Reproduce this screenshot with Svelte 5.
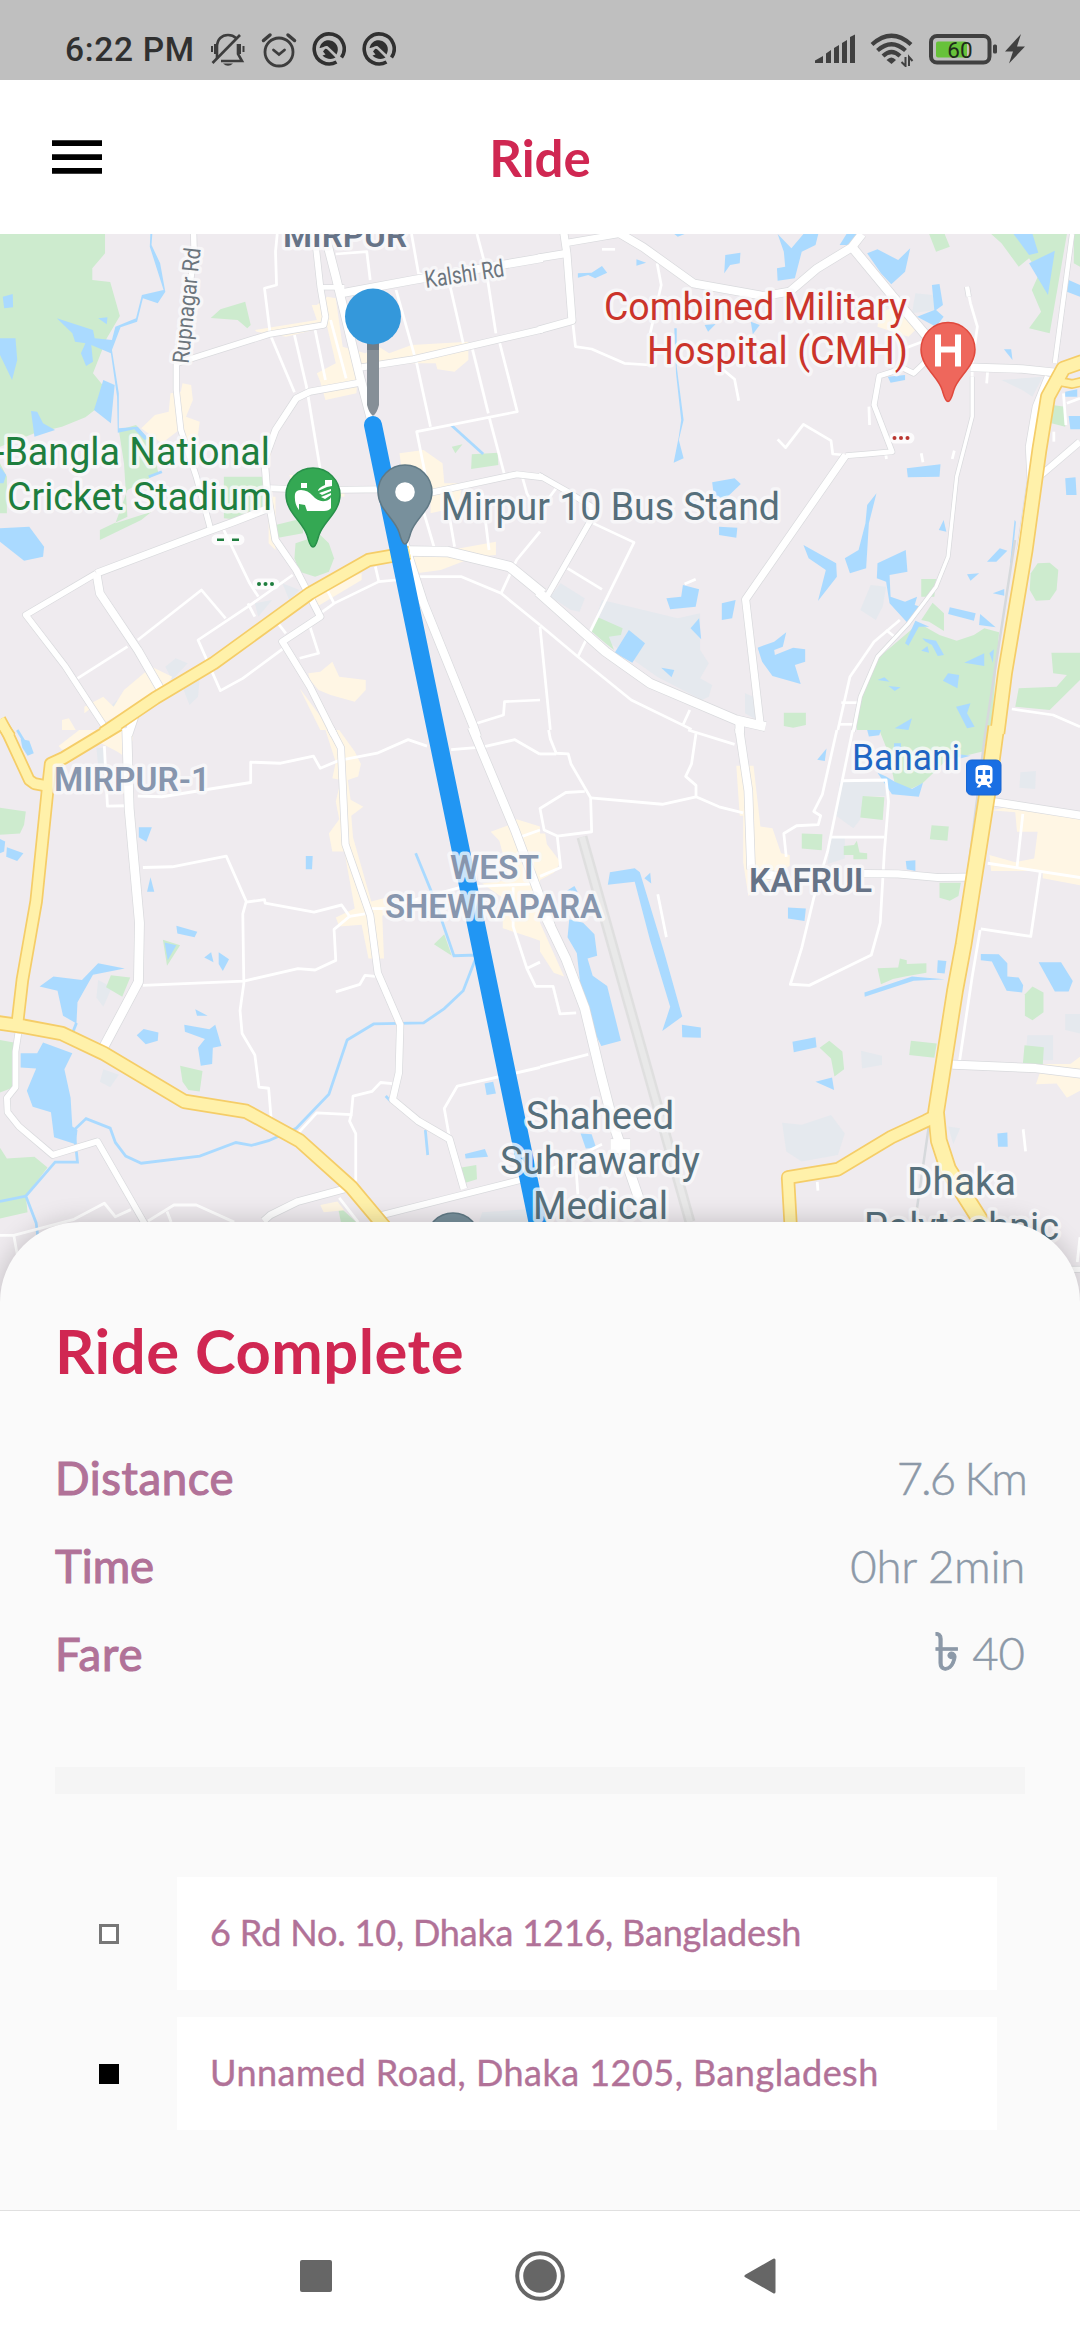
<script>
  // The map is drawn as four tiles; each tile has its own local units.
  const tiles = [
    {
      transform: 'translate(0 230) scale(.34439 .33333)',
      green: [
        'M0,0H305V70L268,115V150L320,156 348,258 310,325 270,430 298,465 275,540 248,562 180,590 100,610 0,650Z',
        'M612,264L640,238 712,215 728,285 718,295 690,270Z',
        'M345,600L395,585 440,640 460,730 370,780 335,880 440,845 410,870 290,930V900L370,860 360,700Z',
        'M0,700L20,740V850H0Z', 'M650,740H765V840L700,870 650,865Z', 'M800,885L880,865 880,910 800,925Z',
        'M858,940L930,915 955,940 970,985 955,1025 915,1040 870,1025 855,985Z',
        'M1370,673L1445,668 1447,705 1368,717Z', 'M1312,650L1343,643 1322,670Z'
      ],
      water: [
        'M165,265L270,300 275,325 325,330 335,290 395,265 412,195 475,180 435,50 437,0H443L440,45 465,100 480,185 458,220 415,205 398,275 350,292 325,360 345,490 345,595 400,590 430,625 420,630 390,598 342,608 340,500 322,370 265,345 270,395 250,408 235,370 248,340 218,335 210,310Z',
        'M8,200L37,192 38,232 12,235Z', 'M0,325H45L50,390 35,450 0,375Z',
        'M300,450L333,465 322,580 273,540Z', 'M90,543L108,545 125,580 160,600 100,620Z',
        'M0,895L85,890 128,950 125,980 70,992 0,935Z', 'M285,265L312,262 310,283Z', 'M0,710L18,735 10,760H0Z'
      ],
      creek: ['M1310,585L1403,672', 'M432,740L470,725'],
      shop: [
        'M905,225L920,225 950,200 975,205 995,350 1060,370 1100,350 1130,370 1195,345 1360,335V390L1320,425 1270,418 1265,400 1110,400 1040,420 1035,490 945,510 930,455 920,430 975,400 950,290 830,320 745,305 740,300 920,270Z',
        'M410,595L450,555 490,545 495,490 525,485 530,460 555,465 560,510 540,560 580,575 570,650 545,640 520,600 470,640Z',
        'M1160,670L1230,660 1285,700 1290,760 1340,760 1335,830 1250,850 1250,770 1170,750Z',
        'M840,735H890V755L1000,770V800L860,790Z', 'M780,800H800V960L780,940Z',
        'M1200,980L1440,935V975L1380,980 1280,1020 1210,1030Z', 'M900,1090L1050,1030 1050,1050 920,1130 900,1110Z',
        'M895,1330L930,1325 965,1295 985,1340 1062,1350V1380L1030,1415 960,1395 925,1380 900,1350Z',
        'M870,1375L960,1500H930Z', 'M360,1380L440,1310 500,1340 480,1375 300,1480 270,1430 245,1450 245,1430 300,1400 330,1430Z',
        'M180,1470L200,1465 220,1500H180Z'
      ],
      gray: ['M820,1060L870,1080 840,1110Z', 'M740,1120L790,1110 750,1160Z', 'M480,1310L510,1285 545,1300 500,1350Z', 'M530,1370L580,1345 575,1400 550,1425Z', 'M310,1440L340,1410 360,1430 325,1460Z'],
      minor: [
        'M805,12L800,65 803,165 768,175 785,315 855,487', 'M855,315L890,470 935,750', 'M915,300L945,450', 'M960,270L1005,445',
        'M975,72L1065,65 1075,150', 'M1150,180L1210,400 1250,590', 'M1195,12L1215,130 1305,160 1345,340', 'M1385,12L1410,110 1440,310',
        'M1370,350L1418,550', 'M1450,335L1502,545 1210,605 1240,760', 'M1420,560L1465,735', 'M1300,830L1320,950', 'M1220,810L1260,950', 'M1400,790L1420,960',
        'M650,900L725,1060 750,1100', 'M850,1035L720,1130 575,1230 640,1382 705,1345 830,1250', 'M400,1230L585,1080 655,1165', 'M225,1345L370,1250',
        'M720,1120L740,1160', 'M800,1170L830,1210', 'M900,1190L925,1270 870,1285', 'M930,1150L970,1120 1100,1055 1150,1050', 'M1200,1040L1340,1040 1455,1090 1568,1185',
        'M1568,905L1500,990 1455,1090', 'M1090,1010L1100,1055', 'M950,1080L970,1120', 'M1385,1480L1462,1455 1465,1415 1568,1410', 'M1515,735L1530,790 1568,860'
      ],
      road: [
        { w: 17, d: 'M562,0L564,80 540,240 512,400 512,480 525,600 570,740 610,892' },
        { w: 18, d: 'M512,400L780,313 940,285 945,260 930,170 912,0' },
        { w: 15, d: 'M930,172L1000,172' },
        { w: 25, d: 'M940,0L975,140 1045,440 1083,590 1180,960 1230,1120 1375,1490 1385,1520' },
        { w: 25, d: 'M990,190L1200,150 1575,84' },
        { w: 20, d: 'M1050,412L1200,388 1575,298' },
        { w: 20, d: 'M1045,458L900,485 860,505 800,600 768,690 775,780 800,930 860,1020 930,1160 820,1235 900,1370 970,1515' },
        { w: 19, d: 'M785,775L940,780 1120,778 1220,795 1500,733 1575,742' },
        { w: 22, d: 'M280,1030L600,905 680,875 780,835' },
        { w: 18, d: 'M280,1030L75,1155 190,1310 310,1500' },
        { w: 24, d: 'M280,1030L290,1090 400,1260 470,1385' },
        { w: 24, d: 'M390,1460L372,1515' },
        { w: 30, d: 'M1185,963L1300,965 1480,1010 1575,1090' }
      ],
      highway: [{ w: 34, d: 'M300,1510L450,1405 620,1300 900,1090 1070,990 1190,968' }, { w: 28, d: 'M-5,1480L10,1490 30,1520' }]
    },
    {
      transform: 'translate(540 230) scale(.34439 .33333)',
      green: [
        'M1130,12H1175L1190,50 1150,65Z', 'M1310,12H1568V110L1550,100 1550,12 1530,12 1480,310 1420,295 1455,245 1428,180 1450,130 1420,85 1390,110 1340,40Z',
        'M1487,525L1525,530V590L1485,580Z', 'M1425,1030L1445,1000 1480,998 1505,1020 1500,1080 1480,1110 1440,1112 1422,1080Z',
        'M1107,1047H1150L1145,1100H1107Z', 'M1107,1170L1140,1118 1173,1150V1203L1130,1175Z',
        'M920,1500L922,1430 975,1290 1100,1180 1160,1215 1210,1232 1260,1215 1290,1195 1333,1207 1310,1500Z',
        'M1485,1268H1568V1350L1480,1440 1380,1430 1390,1375 1500,1370 1530,1335 1490,1330Z',
        'M165,1160L240,1195 235,1215 200,1220 215,1260 190,1240 145,1200Z', 'M708,1448H772V1485L735,1493 708,1488Z'
      ],
      water: [
        'M690,12L730,55 765,12H808L800,45 760,65 740,145 690,152 688,115 712,110 708,65Z', 'M538,75L582,68 580,100 552,105 535,130Z',
        'M110,130L150,128 180,108 195,128 160,145 140,135 110,143Z', 'M280,88L308,98 280,107Z', 'M390,12H420L400,20Z', 'M890,12H935L895,45 870,45Z',
        'M950,70L980,58 1040,90 1075,55 1060,125 1020,163 990,130Z', 'M1138,165L1160,162 1170,225 1150,240 1172,260 1150,290 1095,260 1145,240Z',
        'M390,295H397V410L417,570 403,630 417,685 388,698 403,620 410,570 395,430Z', 'M478,285L510,282 488,305Z', 'M612,275L638,285 618,313Z',
        'M1010,440L1060,435 1060,450 1018,458Z', 'M1065,715L1163,703 1160,740 1068,742Z', 'M500,757L565,745 583,762 540,805 505,800Z', 'M520,890L573,893 570,923 520,915Z',
        'M977,790L955,880 947,1015 900,1030 885,985 925,960 945,880 950,825Z', 'M765,945L860,1000 862,1040 807,1113 830,1020 780,985Z',
        'M980,1000L1062,960 1067,1025 1015,1035 1018,1100 1060,1115 1095,1100 1088,1125 1105,1130 1068,1180 1015,1120 1005,1055 978,1045Z',
        'M415,1065L462,1078 452,1130 378,1138 367,1105 410,1100Z', 'M528,1120L568,1110 558,1165 528,1170Z', 'M462,1165L468,1228 437,1195Z',
        'M258,1200L305,1240 268,1298 217,1268Z', 'M632,1253L680,1235 715,1207 705,1250 680,1260 682,1275 735,1253 770,1258V1295L740,1305 757,1362 675,1338 645,1295Z',
        'M352,1313L390,1320 382,1342Z', 'M1190,1132L1265,1150 1260,1172 1185,1152Z', 'M1278,1152L1323,1192 1275,1185Z', 'M1240,1033L1275,1030 1250,1052Z',
        'M1298,995L1335,955 1357,962 1325,995Z', 'M1158,900L1172,870 1180,905Z', 'M1347,358H1368L1372,390Z', 'M1420,100L1495,62 1475,195Z', 'M1375,12H1430L1447,68 1420,75Z',
        'M1535,150L1568,165V200L1530,185Z', 'M1525,485L1560,478V500L1525,500Z', 'M1535,558H1568V598H1540Z', 'M1525,745L1555,742 1558,795 1528,795Z',
        'M1315,1090L1348,1077V1097Z', 'M1232,1298L1290,1270 1290,1308Z', 'M1110,1225L1150,1232 1173,1275 1155,1278 1138,1245 1120,1235Z', 'M1090,1172L1130,1190 1100,1190 1070,1247 1060,1240Z',
        'M1185,1330L1217,1335 1212,1375 1170,1352Z', 'M1208,1430L1250,1420 1240,1450 1262,1490 1240,1495Z', 'M1365,1000L1378,870 1382,875 1370,1000Z', 'M980,1350L1000,1342 1015,1355Z', 'M1012,1368L1047,1372 1030,1383Z', 'M1030,1495L1080,1465 1070,1500Z', 'M1107,1262L1125,1248 1130,1268Z', 'M1305,1270L1318,1258 1315,1298Z'
      ],
      creek: [],
      shop: ['M985,250L1040,225 1090,300 1070,320 980,290Z'],
      gray: [
        'M60,1060L130,1105 115,1145 90,1140 30,1100Z', 'M180,1110L400,1165 465,1150V1260L490,1300 465,1345 500,1365 490,1400 470,1410 340,1340 150,1200Z',
        'M960,1065L1005,1070 995,1130 975,1170 930,1140Z', 'M1090,190L1140,195 1150,240 1080,250Z', 'M1340,450L1460,440 1430,500 1400,480Z', 'M595,1390L620,1400 630,1470 595,1450Z'
      ],
      minor: [
        'M340,100L352,165 320,310', 'M95,275L103,350 150,357 245,400 320,405', 'M530,418L565,448 577,512', 'M690,628L713,653 765,583 845,632 850,672 885,675',
        'M955,530L957,585', 'M155,880L273,937 110,1280', 'M80,1015L180,1078', 'M0,1185L110,1280 265,1410 440,1498', 'M435,1440L415,1485', 'M0,1190L30,1500',
        'M0,840L50,770', 'M1060,355L1110,335', 'M1300,420L1297,460', 'M1107,670L1112,697', 'M1203,662L1197,687', 'M1003,665L1006,687', 'M180,58H218', 'M420,1062L452,1048',
        'M1520,490L1527,585', 'M1530,520L1568,505', 'M1370,1437L1490,1455 1568,1490', 'M1240,170L1250,220 1270,290 1255,400 1255,550',
        'M1005,1200L1035,1225', 'M875,1418H920', 'M870,1483H910', 'M1045,1170L970,1235 900,1340 865,1500', 'M1492,605V635'
      ],
      road: [
        { w: 14, d: 'M1240,170L1245,200' }, { w: 11, d: 'M1255,440L1255,560 1210,740 1185,980 1150,1070 1070,1180 980,1280 930,1400 910,1505' },
        { w: 23, d: 'M-5,84L78,70' }, { w: 22, d: 'M68,0L78,70 93,272 -5,300' }, { w: 20, d: 'M70,40L230,12' },
        { w: 25, d: 'M215,0L300,52 445,160 650,198 725,185 805,115 905,52 935,12' },
        { w: 27, d: 'M905,50L1025,200 1120,315' }, { w: 16, d: 'M1120,395L1085,430 1055,415 985,438 970,525 1022,665 950,672 888,677' },
        { w: 22, d: 'M888,675L597,1108 640,1490' }, { w: 24, d: 'M1250,412L1400,417 1500,428' }, { w: 14, d: 'M1545,12L1495,400' },
        { w: 20, d: 'M1475,440L1440,530 1420,650 1425,750 1395,960' }, { w: 20, d: 'M1455,735L1568,635' },
        { w: 17, d: 'M-5,735L80,785 150,830 145,875 20,1100' }, { w: 28, d: 'M-5,1086L190,1265 320,1360 570,1470 655,1490' }, { w: 26, d: 'M580,1475V1510' }
      ],
      highway: [{ w: 38, d: 'M1575,395L1520,415 1475,500 1450,660 1410,960 1350,1330 1328,1510' }, { w: 22, d: 'M1575,455L1545,462 1510,455' }]
    },
    {
      transform: 'translate(0 730) scale(.34439 .35714)',
      green: [
        'M0,218L75,228 70,265 58,290 0,293Z', 'M473,587L523,603 485,660Z', 'M322,687L378,693 355,747 308,720Z', 'M1290,572L1312,632 1260,600Z',
        'M0,868L40,875V1000L0,1015Z', 'M523,940L588,955 580,1012 547,1008 530,985Z', 'M0,1170L20,1200 100,1195 138,1225 75,1305 80,1350 0,1368Z', 'M1340,1225L1383,1218 1385,1258 1345,1270Z', 'M980,1330L1035,1378H990Z'
      ],
      water: [
        'M60,25L85,30 98,65 80,72 65,50Z', 'M0,305L15,312 12,340 0,345Z', 'M20,328L68,345 50,367 18,355Z', 'M403,272H441L425,313 403,300Z', 'M437,412L448,453H427Z',
        'M888,353H908L906,390H888Z', 'M512,548L573,565 565,580 515,570Z', 'M478,595L512,603 487,645Z', 'M593,637L613,622 620,650Z', 'M635,622L665,642 647,675 635,655Z',
        'M115,718L155,690 238,700 285,653 362,668 270,685 225,762 222,822 183,800 167,730Z', 'M397,855L417,837 460,847 458,870 423,880Z',
        'M567,782L603,800H572Z', 'M535,825L608,838 625,825 643,885 618,890 616,935 583,940 575,890 595,865 537,845Z',
        'M60,905H108L125,875 210,905 187,950 205,1030 210,1110 225,1120 220,1160 157,1140 148,1070 95,1055 78,1010 105,948 60,945Z',
        'M1407,990L1432,985 1440,1018 1413,1022Z', 'M1350,1187L1408,1173 1417,1195 1352,1200Z', 'M1568,1200L1550,1220 1568,1260Z'
      ],
      creek: ['M1207,345L1260,470 1318,632 1385,630 1345,730 1290,780 1230,820 1085,823 1008,868 955,1020 860,1115 780,1150 730,1163 685,1155 580,1193 410,1213 365,1193 335,1155 320,1115 250,1088 215,1120 225,1210 160,1210 75,1305 105,1380 110,1420', 'M1235,1120L1242,1190', 'M1120,1025L1135,1040', 'M0,1320L75,1305', 'M50,0L75,40', 'M222,820L210,850'],
      shop: [
        'M170,45L230,0H385V30H355V70L340,60 280,30 180,55Z', 'M945,0H985L1030,60 1048,95 1040,130 1010,140 1018,195 1055,215 1020,240 1025,300 1078,480 1140,465V510L1110,520 1115,640 1070,640 1050,545 985,550 975,525 1030,500 1000,340 965,340 955,290 985,250 975,200 990,140 965,135 975,90Z',
        'M1425,285L1480,265 1500,250 1568,270V590L1540,580 1460,555V470L1400,430 1480,420 1450,310Z', 'M930,1330L980,1320 1000,1345 940,1350Z'
      ],
      gray: ['M280,50H305V120L285,100Z', 'M285,700L325,720 300,775 280,750Z', 'M300,950L345,965 320,1000 290,985Z', 'M1400,1350L1568,1340V1380H1390Z'],
      minor: [
        'M303,45L312,213 370,212', 'M400,185L470,187 728,147V90L815,93 910,73 930,107 985,85 1050,73 1095,65 1185,27 1240,45', 'M1310,55L1400,48 1495,27 1568,68',
        'M415,385L500,383 657,353 715,480 705,515 708,710 697,785 703,850 740,910 752,1000 780,1003 787,1085', 'M715,482L768,475 770,485 912,510 992,490 1015,522 970,558 975,645 915,672 865,668 708,703 415,715',
        'M975,733L1045,712 1060,687 1090,690', 'M860,1135L920,1072 1020,1077 1025,1025 1080,1012 1105,987 1140,990', 'M1020,1077L1015,1095 1033,1130V1270', 'M1305,1140L1290,1060 1328,997 1568,945',
        'M0,1415L40,1415 50,1468', 'M40,1415L215,1370 303,1325 335,1363 380,1343', 'M430,1375L505,1330 570,1330 680,1378', 'M485,1348L497,1378', 'M985,1310L1040,1378',
        'M1080,500H1120', 'M1150,490L1340,440 1568,430', 'M1490,440L1490,550 1530,668 1568,650', 'M1530,668L1555,718H1568', 'M1510,300L1568,280', 'M1015,522L1060,515'
      ],
      road: [
        { w: 27, d: 'M368,-5L375,220 405,540 402,705 300,890' }, { w: 20, d: 'M960,-5L990,50 1003,320 1075,520 1097,680 1162,825 1158,960 1140,1035 1215,1095 1305,1145 1347,1285' },
        { w: 25, d: 'M1370,-8L1495,280 1600,550' }, { w: 18, d: 'M53,850L45,900V1000L20,1030 22,1070 55,1110 153,1190 283,1152 420,1382' },
        { w: 20, d: 'M765,1375L785,1358 865,1320 1000,1285' }, { w: 18, d: 'M1110,1358L1347,1300 1530,1255' }
      ],
      highway: [
        { w: 35, d: 'M-5,820L70,830 180,850 300,905 535,1040 715,1068 870,1150 1020,1280 1120,1395' },
        { w: 31, d: 'M345,-15L185,78 147,95 138,170 105,480 65,700 50,825' }, { w: 28, d: 'M0,-30L25,15 85,140 100,150 138,157' }
      ]
    },
    {
      transform: 'translate(540 730) scale(.34439 .35714)',
      green: [
        'M985,0H1305L1285,60 1180,85 1110,150 1070,168 1030,150 1010,60Z', 'M937,185L1000,188 995,252 930,245Z', 'M760,290L820,292 818,337 760,332Z', 'M1137,267L1187,270 1183,310 1132,306Z',
        'M882,325L912,322 920,310 928,343 950,345V362H910V350L882,350Z', 'M1160,428H1222L1215,465 1190,478 1160,470Z', 'M980,667L1040,665 1045,640 1065,645V655L1122,653V680L1060,690 1025,697 990,712Z',
        'M1408,740L1430,718 1462,735V790L1430,813 1408,800Z', 'M812,890L840,870 878,900 883,950 855,970 845,920Z', 'M1077,870L1152,878 1145,918 1072,910Z', 'M1407,883L1463,888 1460,935H1402Z'
      ],
      water: [
        'M950,0H990L985,15 955,18Z', 'M832,52L827,87 805,83Z', 'M1028,37H1048V60H1028Z', 'M980,120L1005,130 1030,145 1080,165 1112,148 1100,187 1022,180Z', 'M1062,367L1090,365V395L1065,390Z',
        'M720,497L772,500 768,535 720,528Z', 'M203,398L275,387 290,398 360,620 413,802 355,843 378,775 320,590 275,425 197,433Z', 'M303,415L320,400 323,430Z', 'M78,450L100,437 110,455Z',
        'M85,530L125,540 158,572 166,632 138,640 153,688 195,717 235,870 178,885 145,820 118,720 107,625 80,580Z', 'M412,825L467,833V862L413,860Z', 'M733,873L800,860 803,888 737,902Z', 'M800,985L848,973 854,1008Z',
        'M942,735L1080,690 1175,698 1085,702 943,747Z', 'M1155,645L1180,647 1175,682 1153,680Z', 'M1280,627L1332,628 1357,653V690L1390,693 1403,715 1400,735 1355,730 1312,648 1280,645Z',
        'M1448,650H1513L1547,703 1535,732H1495Z', 'M1328,1130L1357,1127 1358,1167H1330Z', 'M118,1130L150,1132 163,1170 133,1172Z', 'M1215,68L1250,72 1220,80Z'
      ],
      creek: [],
      shop: [
        'M570,100H620L640,270 675,275 700,345 725,350V380L605,465 590,370V240L580,240Z', 'M1310,225L1390,210 1568,245V435L1460,415 1460,395 1310,395 1305,350 1380,370 1435,360 1445,285 1385,285 1380,230Z',
        'M0,290H15L20,320 60,370 40,400 0,420Z', 'M0,540L70,690 40,680 0,620Z', 'M1460,935H1540L1568,915V1010L1530,1030 1500,990 1440,992Z'
      ],
      gray: [
        'M870,145H1003V185L940,185 930,250 910,275 860,240Z', 'M845,300H885V360L835,375Z', 'M703,1100L760,1105 845,1078 885,1130 865,1190 760,1208 715,1180Z', 'M1395,118L1440,115 1438,165 1392,162Z',
        'M1415,855H1490V925H1410Z', 'M1525,795H1568V850L1525,840Z', 'M932,898L993,912V938L935,948Z', 'M1185,1110L1220,1115 1200,1160Z'
      ],
      minor: [
        'M25,0L30,25 47,65 82,67 90,95 147,190 150,285 50,297 12,280 0,220 75,175 130,172', 'M0,67H47', 'M147,190L355,208 453,187 520,215 590,232', 'M430,0L565,40', 'M453,10L440,95 423,130 453,155V187',
        'M50,297L60,385 0,410', 'M862,0L820,180 795,228 815,240 808,265 745,268 708,290 715,355', 'M908,0L835,340 795,470 760,610 727,712 782,715 962,630 988,540 1000,340 1012,200 1005,140 875,142',
        'M845,300H1000', 'M342,460L367,580', 'M0,718H38L58,795 105,792', 'M0,943L140,908', 'M1402,235L1385,385', 'M1300,373L1568,413', 'M1453,395L1425,578 1280,557', 'M1278,560L1255,690 1217,935',
        'M1403,1118L1410,1180', 'M805,1265L807,1290', 'M105,1230L110,1300', 'M0,1245L180,1160', 'M1568,1420L1560,1490'
      ],
      road: [
        { w: 24, d: 'M578,-5L605,170 613,390' }, { w: 24, d: 'M613,400L700,410' }, { w: 28, d: 'M10,510L75,640 130,780 175,960 215,1110 240,1180 290,1320' }, { w: 40, d: 'M205,1165L262,1165' },
        { w: 21, d: 'M940,402L1040,403 1155,413 1245,412' }, { w: 22, d: 'M1310,200L1575,240' }, { w: 24, d: 'M1198,937L1440,947 1575,963' }, { w: 16, d: 'M1540,1510H1568' }
      ],
      highway: [
        { w: 43, d: 'M1325,-10L1300,170 1230,600 1205,730 1150,1070 1158,1150 1185,1230 1290,1390' },
        { w: 33, d: 'M1150,1080L1120,1095 1020,1140 865,1230 720,1253 728,1390' }
      ]
    }
  ];

  const fills = [
    ['gray', '#e5e9ee'], ['green', '#cdebce'], ['shop', '#fff6e4'], ['water', '#aadaff']
  ];

  const labels = [
    { t: 'MIRPUR', x: 283, y: 247, w: 124, s: 34, c: '#667387', b: 1 },
    { t: '-Bangla National', x: -6, y: 465, w: 276, s: 38.5, c: '#1e7e3e' },
    { t: 'Cricket Stadium', x: 7, y: 510, w: 265, s: 38.5, c: '#1e7e3e' },
    { t: 'Mirpur 10 Bus Stand', x: 441, y: 520, w: 339, s: 38.5, c: '#566f7b' },
    { t: 'Combined Military', x: 604, y: 319.5, w: 303, s: 38.5, c: '#cb342b' },
    { t: 'Hospital (CMH)', x: 647, y: 364, w: 261, s: 38.5, c: '#cb342b' },
    { t: 'MIRPUR-1', x: 54, y: 790.5, w: 156, s: 34, c: '#8796ae', b: 1 },
    { t: 'WEST', x: 450, y: 879, w: 89, s: 34, c: '#8796ae', b: 1 },
    { t: 'SHEWRAPARA', x: 385, y: 918, w: 217, s: 34, c: '#8796ae', b: 1 },
    { t: 'KAFRUL', x: 749, y: 892, w: 123, s: 34, c: '#667387', b: 1 },
    { t: 'Banani', x: 852, y: 770, w: 108, s: 37, c: '#1f66c4' },
    { t: 'Shaheed', x: 526, y: 1129, w: 148, s: 38.5, c: '#566f7b' },
    { t: 'Suhrawardy', x: 500, y: 1174, w: 200, s: 38.5, c: '#566f7b' },
    { t: 'Medical', x: 533, y: 1219, w: 135, s: 38.5, c: '#566f7b' },
    { t: 'Dhaka', x: 907, y: 1195, w: 109, s: 38.5, c: '#566f7b' },
    { t: 'Polytechnic', x: 864, y: 1239.5, w: 195, s: 38.5, c: '#566f7b' }
  ];

  const pin = 'M0,52C-3,52-4,46-6,40C-10,27-27,17-27,0A27,27 0 0 1 27,0C27,17 10,27 6,40C4,46 3,52 0,52Z';

  const details = [
    { name: 'Distance', value: '7.6 Km', kind: 'distance' },
    { name: 'Time', value: '0hr 2min', kind: 'time' }
  ];
  const stops = ['6 Rd No. 10, Dhaka 1216, Bangladesh', 'Unnamed Road, Dhaka 1205, Bangladesh'];
</script>

<div class="screen">
  <div class="status">
    <span class="clock">6:22 PM</span>
    <svg class="bell" width="36" height="36" viewBox="0 0 36 36" fill="none" stroke="#3d3d3d" stroke-width="2.6">
      <path d="M7 27V15C7 7 12 3 18 3C21 3 24 4 26 6M28 12V22L32 29H11" />
      <path d="M2.500 31L30 3" />
      <path d="M2 14V20M5 12V22M30 12V22M33.500 14V20" stroke-width="2" />
      <path d="M13 31.500H23Q18 36 13 31.500Z" fill="#3d3d3d" stroke="none" />
    </svg>
    <svg class="alarm" width="36" height="36" viewBox="0 0 36 36" fill="none" stroke="#3d3d3d" stroke-width="2.8" stroke-linecap="round">
      <circle cx="18" cy="20" r="14" />
      <path d="M12.500 18L18 22.500L23.500 18" />
      <path d="M2.500 8.500L9 3M33.500 8.500L27 3" stroke-width="3.500" />
    </svg>
    {#each [0, 1] as i (i)}
      <svg class="disc" width="34" height="34" viewBox="0 0 34 34">
        <path d="M24.500 30A15 15 0 1 1 29.500 25.500" fill="none" stroke="#303030" stroke-width="3.600" />
        <path d="M7.500 16C9 10 14 7.500 18 8.500C24.500 9.500 28 16 24.500 22.500L16 14.500C13 13 11 16.500 7.500 16Z" fill="#303030" />
        <path d="M13 17Q14.500 16 16.500 18.500L23.500 25.500C20 28 13.500 27 10.500 23.500L13.500 22.500L11 19.500Z" fill="#303030" />
      </svg>
    {/each}
    <div class="space"></div>
    <svg class="signal" width="42" height="30" viewBox="0 0 42 30" fill="#404040">
      <path d="M1 29V26.500L9 22V29ZM12 29V19.500L17 16V29ZM20 29V14L25 11V29ZM28 29V9L33 6V29ZM36 29V3L41 .5V29Z" />
    </svg>
    <svg class="wifi" width="44" height="34" viewBox="0 0 44 34">
      <path d="M2 11.500Q21.500-6 41 11.500M7.500 17.500Q21.500 5 35.500 17.500M13 23Q21.500 15 30 23" fill="none" stroke="#404040" stroke-width="4.200" />
      <path d="M16.500 27Q21.500 22 26 27L21.500 31Z" fill="#404040" />
      <path d="M35.500 24V33L31.500 29M39 33V24L42.500 28" fill="none" stroke="#404040" stroke-width="2" />
    </svg>
    <svg class="battery" width="70" height="31" viewBox="0 0 70 31">
      <rect x="2" y="2" width="58.500" height="26.500" rx="6" fill="none" stroke="#404040" stroke-width="4" />
      <rect x="7" y="7.500" width="31" height="16" rx="2" fill="#67c23a" />
      <rect x="64" y="10.500" width="4" height="9" rx="1.500" fill="#404040" />
      <text x="31" y="23.500" text-anchor="middle" font-size="22.500" fill="#1f2b1b" font-family="Roboto, sans-serif">60</text>
    </svg>
    <svg class="bolt" width="20" height="30" viewBox="0 0 20 30"><path d="M16 0L0 17.500H8L4 29.500L20 12.500H12Z" fill="#404040" /></svg>
  </div>

  <header>
    <svg class="menu" width="50" height="34" viewBox="0 0 50 34"><path d="M0 .3H50V6H0ZM0 14.200H50V19.900H0ZM0 28H50V33.700H0Z" /></svg>
    <h1>Ride</h1>
  </header>

  <svg class="map" width="1080" height="1106" viewBox="0 234 1080 1106">
    <rect y="234" width="1080" height="1106" fill="#efebef" />
    {#each fills as [kind, color] (kind)}
      {#each tiles as tile (tile.transform)}
        <g transform={tile.transform} fill={color}>
          {#each tile[kind] as d, i (i)}<path {d} />{/each}
        </g>
      {/each}
    {/each}
    {#each tiles as tile (tile.transform)}
      <g transform={tile.transform} class="creek">
        {#each tile.creek as d, i (i)}<path {d} />{/each}
      </g>
    {/each}

    <!-- Airfield strip -->
    <path d="M582 837L690 1222" fill="none" stroke="#dfdfdf" stroke-width="11" />
    <path d="M582 837L690 1222" fill="none" stroke="#e9e9e9" stroke-width="6" />
    <!-- Railway beside the highway -->
    <path d="M1015 540L985 735L946 1050M929 1125L916 1215" fill="none" stroke="#d6d9dc" stroke-width="2.500" />

    {#each tiles as tile (tile.transform)}
      <g transform={tile.transform} class="line">
        {#each tile.minor as d, i (i)}<path {d} stroke="#fff" stroke-width="8" />{/each}
        {#each tile.road as r, i (i)}<path d={r.d} stroke="#d9dadd" stroke-width={r.w + 3} />{/each}
      </g>
    {/each}
    {#each tiles as tile (tile.transform)}
      <g transform={tile.transform} class="line">
        {#each tile.road as r, i (i)}<path d={r.d} stroke="#fff" stroke-width={r.w - 1} />{/each}
      </g>
    {/each}
    {#each tiles as tile (tile.transform)}
      <g transform={tile.transform} class="line">
        {#each tile.highway as r, i (i)}<path d={r.d} stroke="#f5cd68" stroke-width={r.w + 8} />{/each}
      </g>
    {/each}
    {#each tiles as tile (tile.transform)}
      <g transform={tile.transform} class="line">
        {#each tile.highway as r, i (i)}<path d={r.d} stroke="#fff1aa" stroke-width={r.w - 2} />{/each}
      </g>
    {/each}

    <path d="M373 425L540 1234" fill="none" stroke="#2196f3" stroke-width="18" stroke-linecap="round" />

    <g class="label">
      {#each labels as l (l.t)}
        <text x={l.x} y={l.y} textLength={l.w} lengthAdjust="spacingAndGlyphs" font-size={l.s} fill={l.c} font-weight={l.b ? 600 : 400}>{l.t}</text>
      {/each}
      <text transform="translate(188.500 364) rotate(-84)" textLength="116" lengthAdjust="spacingAndGlyphs" font-size="23" fill="#6c757d">Rupnagar Rd</text>
      <text transform="translate(426 288) rotate(-8.500)" textLength="80" lengthAdjust="spacingAndGlyphs" font-size="24" fill="#6c757d">Kalshi Rd</text>
    </g>
    <g fill="none" stroke-width="11" stroke="#fff" stroke-opacity=".8" stroke-linecap="round"><path d="M217 539.700H239M258 584H274M895 438H909" /></g>
    <path d="M217 539.700H224M232 539.700H239" stroke="#1e7e3e" stroke-width="2.500" />
    <g fill="#1e7e3e"><circle cx="259" cy="584" r="2" /><circle cx="265.500" cy="584" r="2" /><circle cx="272" cy="584" r="2" /></g>
    <g fill="#b93630"><circle cx="894.500" cy="438" r="2" /><circle cx="901" cy="438" r="2" /><circle cx="907.500" cy="438" r="2" /></g>

    <g transform="translate(313 495)">
      <path d={pin} fill="#34a853" stroke="#28904a" stroke-width="1.500" />
      <path d="M-18 -1Q-17 -5 -12 -5Q-5 -5 0 1Q5 7 12 6Q17 5 18 2V13Q16 16 11 16H-6L-8 10L-14 9V15Q-19 9 -18 -1ZM-12 -12H-6V-7H-12ZM12 -15H19V-9L14 -8L5 -4Q5 -7 12 -10ZM6 -2L18 -6V-4L9 0ZM8 2L18 -2V0L12 4Z" fill="#fff" />
    </g>
    <g transform="translate(405 492)">
      <path d={pin} fill="#78909c" stroke="#607985" stroke-width="1.500" />
      <circle r="9.800" fill="#fff" />
    </g>
    <g transform="translate(948 349.500)">
      <path d={pin} fill="#ee675c" stroke="#e0493d" stroke-width="1.500" />
      <path d="M-13 -15H-7V-3H7V-15H13V17H7V3H-7V17H-13Z" fill="#fff" />
    </g>
    <circle cx="453" cy="1240" r="27" fill="#78909c" stroke="#607985" stroke-width="1.500" />

    <g transform="translate(966.500 760)">
      <rect width="34.500" height="35" rx="5" fill="#1a6fe3" stroke="#1967d2" stroke-width="1" />
      <path d="M9 9Q9 5 17.500 5T26 9V20Q26 24 22.500 24L25 27.500H22L20 25H15L13 27.500H10L12.500 24Q9 24 9 20Z" fill="#fff" />
      <path d="M11.500 10H16.200V15H11.500ZM18.800 10H23.500V15H18.800Z" fill="#1a6fe3" />
      <circle cx="13" cy="20" r="1.700" fill="#1a6fe3" /><circle cx="22" cy="20" r="1.700" fill="#1a6fe3" />
    </g>

    <path d="M367 340H379V405Q377 413 373 416Q369 413 367 405Z" fill="#868f97" />
    <path d="M367 340H379V350H367Z" fill="#707d88" />
    <circle cx="373" cy="316.500" r="28" fill="#3498db" />
  </svg>

  <main>
    <h2>Ride Complete</h2>
    <dl>
      {#each details as d (d.name)}
        <div class="row {d.kind}"><dt>{d.name}</dt><dd>{d.value}</dd></div>
      {/each}
      <div class="row fare"><dt>Fare</dt><dd><span class="taka">৳</span> 40</dd></div>
    </dl>
    <div class="divider"></div>
    <div class="stops">
      {#each stops as stop, i (stop)}
        <div class="stop">
          <span class="mark" class:filled={i === 1}></span>
          <div class="address" class:wide={i === 1}>{stop}</div>
        </div>
      {/each}
    </div>
  </main>

  <nav>
    <svg width="32" height="32" viewBox="0 0 32 32"><rect width="32" height="32" rx="2" fill="#666" /></svg>
    <svg width="50" height="50" viewBox="0 0 50 50"><circle cx="25" cy="25" r="22.800" fill="none" stroke="#666" stroke-width="4" /><circle cx="25" cy="25" r="16.800" fill="#666" /></svg>
    <svg width="32" height="36" viewBox="0 0 32 36"><path d="M2 18L30 2V34Z" fill="#666" stroke="#666" stroke-width="3" stroke-linejoin="round" /></svg>
  </nav>
</div>

<style>
  :global(body) { margin: 0; background: #fff; }
  .screen { width: 1080px; height: 2340px; overflow: hidden; display: flex; flex-direction: column; font-family: Lato, "Liberation Sans", sans-serif; background: #fff; }
  svg { display: block; flex: none; }

  .status { flex: none; height: 80px; box-sizing: border-box; padding: 20px 55px 0 65px; background: #bfbfbf; display: flex; align-items: center; }
  .clock { width: 145px; font: 500 33.500px/40px Roboto, sans-serif; letter-spacing: .7px; color: #303030; white-space: nowrap; }
  .alarm { margin-left: 15px; }
  .disc { margin-left: 15px; margin-bottom: 2px; }
  .alarm + .disc { margin-left: 15px; }
  .disc + .disc { margin-left: 16px; }
  .space { flex: 1; }
  .signal { margin-bottom: 2px; }
  .wifi { margin-left: 14px; }
  .battery { margin-left: 15px; margin-bottom: 1px; }
  .bolt { margin-left: 6px; margin-bottom: 2px; }

  header { flex: none; height: 154px; display: grid; grid-template-columns: 104px 1fr 104px; align-items: center; background: #fff; }
  .menu { margin-left: 52px; }
  h1 { margin: 2px 0 0; text-align: center; font-size: 51px; line-height: 60px; font-weight: 700; color: #d02752; }

  .map { margin-bottom: -118px; }
  .creek { fill: none; stroke: #aadaff; stroke-width: 8px; }
  .line { fill: none; stroke-linejoin: round; }
  .label text { font-family: Roboto, sans-serif; paint-order: stroke; stroke: rgba(250, 250, 251, .78); stroke-width: 7px; stroke-linejoin: round; }

  main { position: relative; flex: none; height: 988px; box-sizing: border-box; padding: 92px 55px 0; background: #fafafa; border-radius: 80px 80px 0 0; box-shadow: 0 0 26px rgba(0, 0, 0, .2); }
  h2 { margin: 0; font-size: 61.500px; line-height: 72px; font-weight: 700; color: #d02752; letter-spacing: .5px; }
  dl { margin: 47px 0 0; }
  .row { height: 88px; display: flex; justify-content: space-between; align-items: center; }
  dt { font-size: 45.500px; font-weight: 400; color: #b17298; -webkit-text-stroke: 1.100px #b17298; }
  dd { margin: 0; font-size: 45.500px; font-weight: 300; color: #8c99a8; -webkit-text-stroke: .5px #8c99a8; }
  .distance dt { letter-spacing: .6px; }
  .distance dd { letter-spacing: -2px; margin-right: -1px; }
  .time dd { letter-spacing: -.3px; }
  .fare dt { letter-spacing: .9px; }
  .fare dd { line-height: 54px; padding-bottom: 4px; }
  .taka { font-size: 52px; line-height: 54px; -webkit-text-stroke-width: 1px; }
  .divider { height: 27px; margin-top: 70px; background: #f5f5f5; }
  .stops { display: grid; gap: 27px; margin: 83px 28px 0 44px; }
  .stop { display: grid; grid-template-columns: 78px 1fr; align-items: center; height: 113px; }
  .mark { width: 20px; height: 20px; box-sizing: border-box; border: 3px solid #777; background: #fff; }
  .filled { border: 0; background: #000; }
  .address { height: 113px; box-sizing: border-box; padding-left: 33px; background: #fff; font-size: 36px; line-height: 111px; letter-spacing: -.18px; color: #b17298; -webkit-text-stroke: .4px #b17298; white-space: nowrap; }
  .wide { letter-spacing: .48px; }

  nav { position: relative; flex: 1; border-top: 1px solid #e0e0e0; box-sizing: border-box; display: flex; padding-left: 300px; align-items: center; gap: 183px; background: #fff; }
  nav svg:last-child { margin-left: -4px; }
</style>
